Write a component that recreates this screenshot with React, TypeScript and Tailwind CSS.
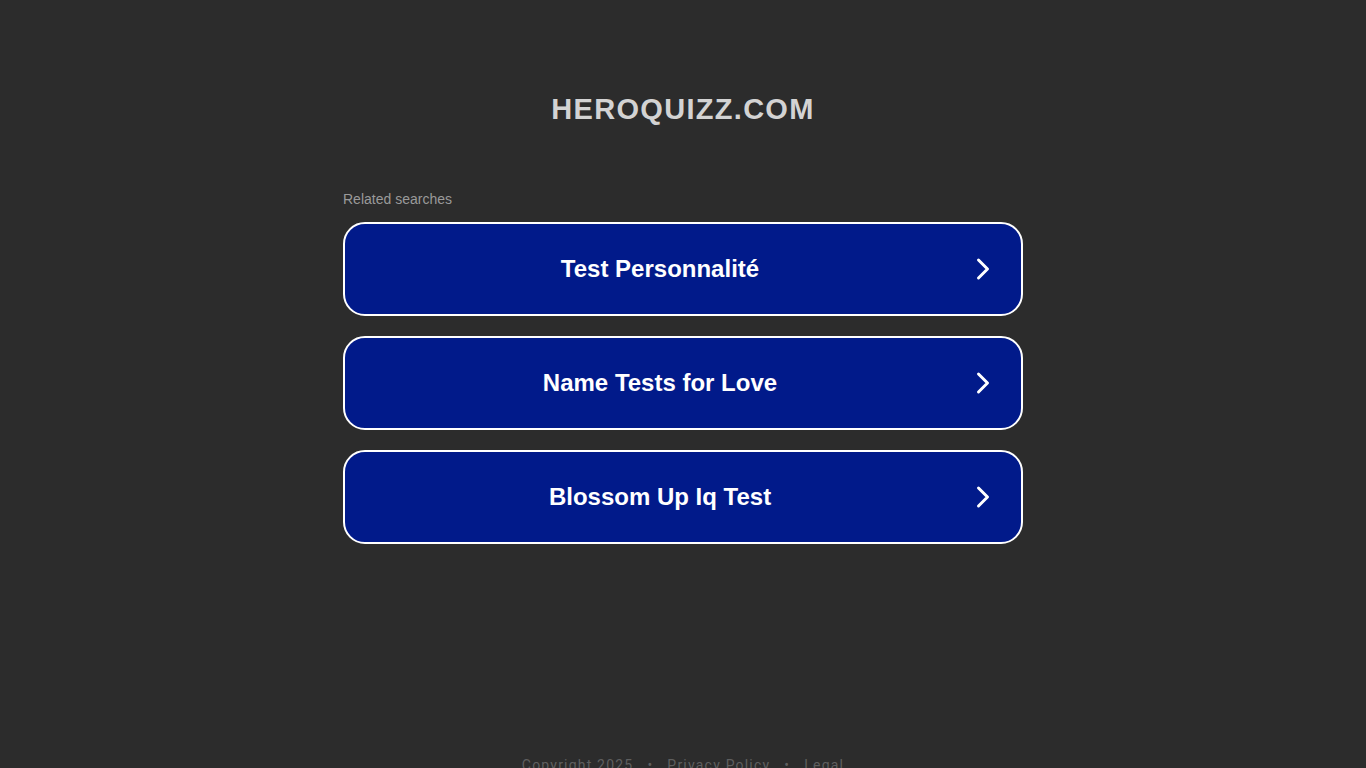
import React from "react";

const items = ["Test Personnalité", "Name Tests for Love", "Blossom Up Iq Test"];

function Chevron() {
  return (
    <svg width="16" height="24" viewBox="0 0 16 24" fill="none" className="shrink-0">
      <path d="M3.5 3 L12.5 12 L3.5 21" stroke="white" strokeWidth="3" strokeLinecap="round" strokeLinejoin="round" />
    </svg>
  );
}

export default function App() {
  return (
    <div className="min-h-[768px] h-[768px] overflow-hidden bg-[#2c2c2c] flex flex-col items-center font-['Liberation_Sans',Arial,sans-serif]">
      <h1 className="mt-[91px] text-[29px] leading-[36px] font-bold tracking-[1.3px] text-[#d3d3d3]">HEROQUIZZ.COM</h1>
      <div className="mt-[63px] w-[680px] flex flex-col">
        <div className="text-[14px] leading-[18px] text-[#9a9a9a]">Related searches</div>
        <div className="mt-[14px] flex flex-col gap-[20px]">
          {items.map((t) => (
            <div
              key={t}
              className="h-[94px] rounded-[22px] border-2 border-white bg-[#011a8a] flex items-center pl-0 pr-[30px]"
            >
              <span className="flex-1 text-center text-[24px] font-bold text-white">{t}</span>
              <Chevron />
            </div>
          ))}
        </div>
      </div>
      <div className="mt-auto mb-[-7px] text-[14px] leading-[20px] tracking-[1.2px] text-[#5f5f5f] font-['Roboto',sans-serif] flex gap-[14px]">
        <span>Copyright 2025</span>
        <span>•</span>
        <span>Privacy Policy</span>
        <span>•</span>
        <span>Legal</span>
      </div>
    </div>
  );
}
